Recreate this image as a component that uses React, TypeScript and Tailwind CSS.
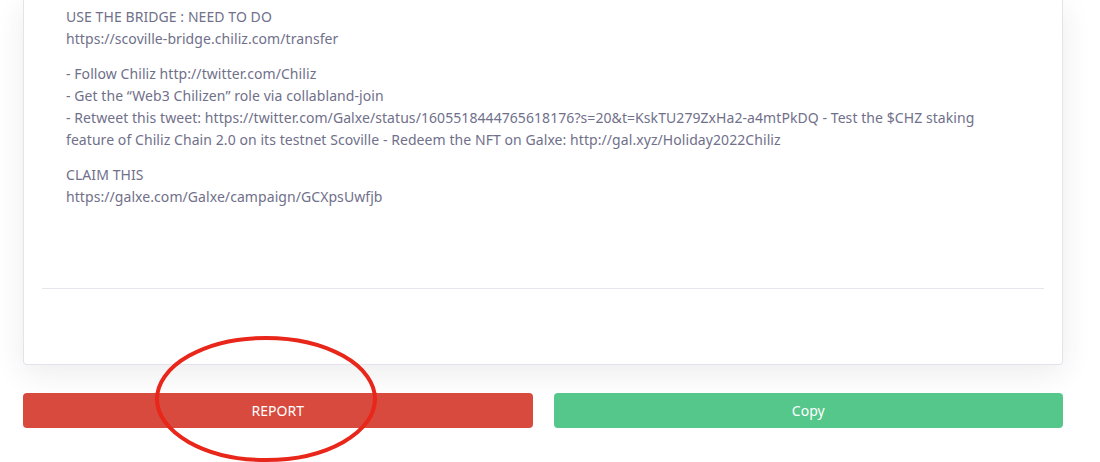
export default function App() {
  const font = { fontFamily: '"Noto Sans", "Open Sans", sans-serif' };

  return (
    <div className="relative h-[462px] w-[1100px] overflow-hidden bg-white" style={font}>
      <div className="ml-[23px] w-[1040px]">
        {/* Card */}
        <div className="rounded-b-[4px] border border-t-0 border-[#e3e3ec] bg-white px-[18px] shadow-[0_8px_30px_rgba(40,40,70,0.09)]">
          <div className="px-[24px] pt-[6px] pb-[80px] text-[14px] leading-[22px] tracking-[0.07px] text-[#70708a]">
            <p className="whitespace-nowrap">
              USE THE BRIDGE : NEED TO DO
              <br />
              https://scoville-bridge.chiliz.com/transfer
            </p>
            <p className="mt-[13px] whitespace-nowrap">
              - Follow Chiliz http://twitter.com/Chiliz
              <br />
              - Get the “Web3 Chilizen” role via collabland-join
              <br />
              - Retweet this tweet: https://twitter.com/Galxe/status/1605518444765618176?s=20&amp;t=KskTU279ZxHa2-a4mtPkDQ - Test the $CHZ staking
              <br />
              feature of Chiliz Chain 2.0 on its testnet Scoville - Redeem the NFT on Galxe: http://gal.xyz/Holiday2022Chiliz
            </p>
            <p className="mt-[13px] whitespace-nowrap">
              CLAIM THIS
              <br />
              https://galxe.com/Galxe/campaign/GCXpsUwfjb
            </p>
          </div>
          <div className="h-[76px] border-t border-[#e6e6ec]" />
        </div>

        {/* Actions */}
        <div className="mt-[28px] flex gap-[21px]">
          <button className="h-[35px] flex-1 rounded-[4px] bg-[#d84a3e] text-[14px] text-white">
            REPORT
          </button>
          <button className="h-[35px] flex-1 rounded-[4px] bg-[#55c78b] text-[14px] text-white">
            Copy
          </button>
        </div>
      </div>

      {/* Annotation */}
      <svg
        className="pointer-events-none absolute left-[152px] top-[334px]"
        width="228"
        height="130"
        viewBox="0 0 228 130"
      >
        <ellipse cx="114" cy="65" rx="109" ry="61" fill="none" stroke="#e8261a" strokeWidth="4" />
      </svg>
    </div>
  );
}
